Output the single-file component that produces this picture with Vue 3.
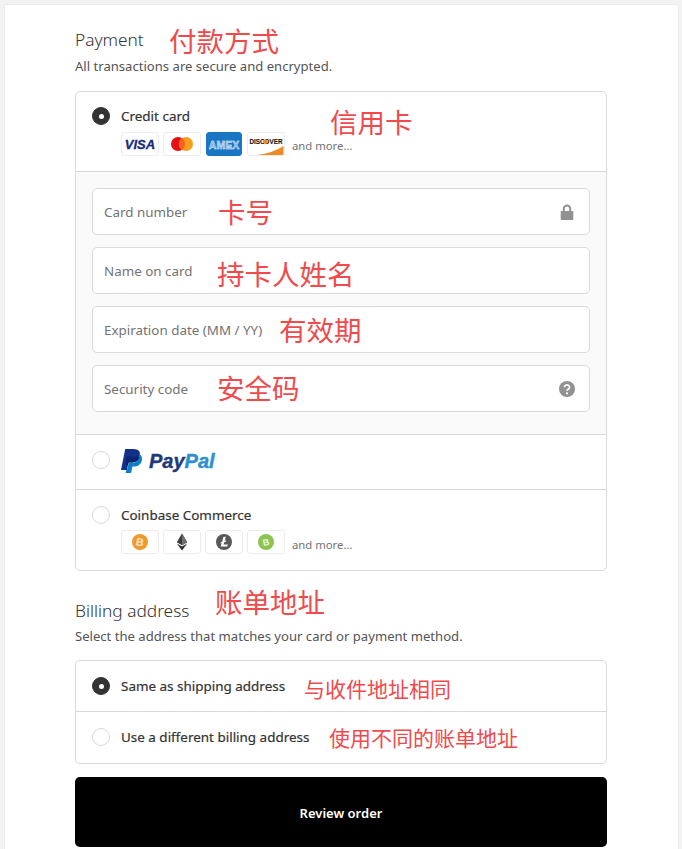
<template>
  <div class="page">
    <main class="panel">
      <section class="section">
        <h2 class="section__title">Payment</h2>
        <p class="section__sub">All transactions are secure and encrypted.</p>

        <div class="box">
          <div class="option option--tall">
            <span class="radio radio--on"></span>
            <div class="option__body">
              <div class="option__label">Credit card</div>
              <div class="badges">
                <span class="badge">
                  <svg viewBox="0 0 38 24" width="38" height="24">
                    <text x="19" y="17" text-anchor="middle" class="logo-visa">VISA</text>
                  </svg>
                </span>
                <span class="badge">
                  <svg viewBox="0 0 38 24" width="38" height="24">
                    <circle cx="15" cy="12" r="7" fill="#e3101a" />
                    <circle cx="23" cy="12" r="7" fill="#f99e1c" />
                    <path d="M19 6.200a7 7 0 0 1 0 11.600a7 7 0 0 1 0-11.600z" fill="#f0641e" />
                  </svg>
                </span>
                <span class="badge badge--amex">
                  <svg viewBox="0 0 36 24" width="36" height="24">
                    <text x="18" y="16.500" text-anchor="middle" class="logo-amex">AMEX</text>
                  </svg>
                </span>
                <span class="badge">
                  <svg viewBox="0 0 38 24" width="38" height="24">
                    <path d="M10 23 Q26 21 36.500 14 V23z" fill="#ee8a24" />
                    <text x="19" y="12" text-anchor="middle" class="logo-discover">DISCOVER</text>
                    <circle cx="18.500" cy="9.800" r="2.400" fill="#f08a1d" />
                  </svg>
                </span>
                <span class="more">and more...</span>
              </div>
            </div>
          </div>

          <div class="fields">
            <div v-for="field in fields" :key="field.label" class="field">
              <span class="field__label">{{ field.label }}</span>
              <svg v-if="field.icon === 'lock'" class="field__icon" viewBox="0 0 16 16" width="16" height="16">
                <path d="M2.500 7h1.300V4.700a4.200 4.200 0 0 1 8.400 0V7h1.300a.8.800 0 0 1 .8.800v7.400a.8.800 0 0 1-.8.800H2.500a.8.800 0 0 1-.8-.8V7.800a.8.800 0 0 1 .8-.8zM5.800 4.700V7h4.400V4.700a2.200 2.200 0 0 0-4.400 0z" fill="#919191" fill-rule="evenodd" />
              </svg>
              <svg v-if="field.icon === 'help'" class="field__icon" viewBox="0 0 16 16" width="16" height="16">
                <circle cx="8" cy="8" r="8" fill="#919191" />
                <path d="M5.400 6.200a2.600 2.300 0 1 1 3.900 2c-.8.500-1.300.8-1.300 1.500" fill="none" stroke="#fff" stroke-width="1.700" />
                <circle cx="8" cy="12.300" r="1.100" fill="#fff" />
              </svg>
            </div>
          </div>

          <div class="option option--paypal">
            <span class="radio"></span>
            <div class="paypal">
              <svg viewBox="0 0 21 24" width="21" height="24">
                <path d="M4.200 0H12.500C17.500 0 19.600 2.800 18.800 6.500C17.800 11.500 14.500 13.500 10 13.500H7.500L6 21H0z" fill="#12318a" />
                <path d="M18.900 5.500C20.800 6.700 21.400 8.800 20.800 11.400C19.800 15.500 16.900 17.500 13 17.500H11.400L10.100 24H4.600L5.400 20.800H6.100L7.700 14H10.200C14.700 14 17.900 11.800 18.900 5.500z" fill="#0c7fc7" />
                <path d="M5.600 7.500H14C15.500 7.500 17.200 7.800 18.600 8.200C17.400 11.900 14.400 13.500 10 13.500H7.500L7 16H4.500z" fill="#0a2470" />
              </svg>
              <span class="paypal__word"><span class="paypal__pay">Pay</span><span class="paypal__pal">Pal</span></span>
            </div>
          </div>

          <div class="option option--tall option--coin option--last">
            <span class="radio"></span>
            <div class="option__body">
              <div class="option__label">Coinbase Commerce</div>
              <div class="badges">
                <span class="badge">
                  <svg viewBox="0 0 38 24" width="38" height="24">
                    <circle cx="19" cy="12" r="8" fill="#f09a2e" />
                    <text x="19" y="16" text-anchor="middle" class="logo-coin" transform="rotate(12 19 12)">B</text>
                  </svg>
                </span>
                <span class="badge">
                  <svg viewBox="0 0 38 24" width="38" height="24">
                    <path d="M19 3.500L13.800 12.300L19 15.300L24.200 12.300z" fill="#3c3c3d" />
                    <path d="M19 3.500V15.300L24.200 12.300z" fill="#6f6f70" />
                    <path d="M13.800 13.500L19 20.500L24.200 13.500L19 16.600z" fill="#2a2a2b" />
                  </svg>
                </span>
                <span class="badge">
                  <svg viewBox="0 0 38 24" width="38" height="24">
                    <circle cx="19" cy="12" r="8" fill="#58595b" />
                    <path d="M18.500 6.800h2.300l-1 4l1.500-.5l-.4 1.400l-1.600.6l-.7 2.300h4.200l-.5 1.800h-6.600l1-3.400l-1.300.5l.4-1.300l1.300-.5z" fill="#fff" />
                  </svg>
                </span>
                <span class="badge">
                  <svg viewBox="0 0 38 24" width="38" height="24">
                    <circle cx="19" cy="12" r="8" fill="#8dc351" />
                    <text x="19" y="15.500" text-anchor="middle" class="logo-coin logo-coin--small" transform="rotate(-12 19 12)">B</text>
                  </svg>
                </span>
                <span class="more">and more...</span>
              </div>
            </div>
          </div>
        </div>
      </section>

      <section class="section section--billing">
        <h2 class="section__title">Billing address</h2>
        <p class="section__sub">Select the address that matches your card or payment method.</p>

        <div class="box">
          <div class="option option--short">
            <span class="radio radio--on"></span>
            <div class="option__label">Same as shipping address</div>
          </div>
          <div class="option option--short option--last">
            <span class="radio"></span>
            <div class="option__label">Use a different billing address</div>
          </div>
        </div>
      </section>

      <button type="button" class="review">Review order</button>

      <span
        v-for="note in notes"
        :key="note.text"
        class="note"
        :style="{ left: note.x + 'px', top: note.y + 'px', fontSize: note.size + 'px' }"
      >{{ note.text }}</span>
    </main>
  </div>
</template>

<script setup>
const fields = [
  { label: 'Card number', icon: 'lock' },
  { label: 'Name on card' },
  { label: 'Expiration date (MM / YY)' },
  { label: 'Security code', icon: 'help' },
];

// red annotations pasted over the screenshot
const notes = [
  { text: '付款方式', x: 164, y: 23, size: 27.5 },
  { text: '信用卡', x: 325, y: 104, size: 27.5 },
  { text: '卡号', x: 213, y: 194, size: 27.5 },
  { text: '持卡人姓名', x: 212, y: 256, size: 27.5 },
  { text: '有效期', x: 274, y: 312, size: 27.5 },
  { text: '安全码', x: 212, y: 370, size: 27.5 },
  { text: '账单地址', x: 210, y: 584, size: 27.5 },
  { text: '与收件地址相同', x: 299, y: 675, size: 21 },
  { text: '使用不同的账单地址', x: 324, y: 724, size: 21 },
];
</script>

<style>
html,
body {
  margin: 0;
  height: 849px;
  overflow: hidden;
  background: #f3f3f3;
}
</style>

<style scoped>
.page {
  padding: 5px 4px 0 5px;
  font-family: "Noto Sans", "Open Sans", sans-serif;
  color: #333;
}

.panel {
  position: relative;
  background: #fff;
  height: 844px;
  padding: 0 71px 0 70px;
  box-shadow: 0 0 0 1px #ebebeb;
}

.section {
  padding-top: 24px;
}

.section--billing {
  padding-top: 29px;
}

.section__title {
  margin: 0;
  font-size: 17.300px;
  line-height: 22px;
  font-weight: 300;
}

.section__sub {
  margin: 6px 0 0;
  font-size: 13.100px;
  line-height: 18px;
  color: #545454;
}

.section--billing .section__sub {
  margin-top: 5px;
}

.box {
  margin-top: 16px;
  border: 1px solid #d9d9d9;
  border-radius: 5px;
}

.section--billing .box {
  margin-top: 15px;
}

.option {
  display: flex;
  align-items: flex-start;
  gap: 11px;
  padding: 16px 16px 0;
  border-bottom: 1px solid #d9d9d9;
  box-sizing: border-box;
}

.option--tall {
  height: 80px;
  padding-top: 15px;
}

.option--paypal {
  height: 55px;
  padding-top: 16px;
}

.option--coin {
  padding-top: 16px;
}

.option--coin .badges {
  margin-top: 5px;
}

.option--coin .more {
  margin-top: 5px;
}

.option--short {
  height: 51px;
  padding-top: 16px;
}

.option--short .option__label {
  margin-top: -1px;
}

.option--last {
  border-bottom: 0;
}

.option__body {
  margin-top: -1px;
}

.option__label {
  font-size: 13.450px;
  line-height: 20px;
  font-weight: 400;
  color: #333;
  -webkit-text-stroke: 0.2px #333;
}

.radio {
  flex: none;
  position: relative;
  width: 18px;
  height: 18px;
  border: 1px solid #d9d9d9;
  border-radius: 50%;
  box-sizing: border-box;
  background: #fff;
}

.radio--on {
  background: #333;
  border-color: #333;
}

.radio--on::after {
  content: "";
  position: absolute;
  left: 5.500px;
  top: 5.500px;
  width: 5px;
  height: 5px;
  border-radius: 50%;
  background: #fff;
}

.badges {
  display: flex;
  align-items: center;
  gap: 4px;
  margin-top: 6px;
}

.badge {
  display: flex;
  justify-content: center;
  width: 38px;
  height: 24px;
  border: 1px solid #ececec;
  border-radius: 3px;
  box-sizing: border-box;
  overflow: hidden;
  background: #fff;
}

.badge svg {
  flex: none;
  margin-top: -1px;
}

.badge--amex {
  width: 36px;
  margin: 0 1px;
  background: #1976c5;
  border-color: #1976c5;
}

.logo-visa {
  font: italic 700 13px "Liberation Sans", sans-serif;
  fill: #1a2a78;
  stroke: #1a2a78;
  stroke-width: 0.300px;
}

.logo-amex {
  font: 700 10.500px "Liberation Sans", sans-serif;
  fill: #6aa9e0;
  stroke: #fff;
  stroke-width: 0.400px;
}

.logo-discover {
  font: 700 6.300px "Liberation Sans", sans-serif;
  fill: #111;
  stroke: #111;
  stroke-width: 0.100px;
}

.logo-coin {
  font: 700 11px "Liberation Sans", sans-serif;
  fill: #fbe4c4;
}

.logo-coin--small {
  font-size: 9px;
  fill: #eef8e2;
}

.more {
  margin: 3px 0 0 3px;
  font-size: 11.300px;
  color: #737373;
}

.fields {
  display: flex;
  flex-direction: column;
  gap: 12px;
  padding: 16px 16px 22px;
  background: #fafafa;
  border-bottom: 1px solid #d9d9d9;
}

.field {
  display: flex;
  align-items: center;
  justify-content: space-between;
  height: 47px;
  padding: 0 14px 0 11px;
  border: 1px solid #d9d9d9;
  border-radius: 5px;
  box-sizing: border-box;
  background: #fff;
}

.field__label {
  font-size: 13.400px;
  color: #737373;
}

.paypal {
  display: flex;
  align-items: center;
  gap: 7px;
  margin-top: -2px;
}

.paypal__word {
  font: italic 700 20px "Liberation Sans", sans-serif;
  -webkit-text-stroke: 0.4px currentColor;
}

.paypal__pay {
  color: #1f3a7a;
}

.paypal__pal {
  color: #2b8fd0;
}

.review {
  display: block;
  width: 100%;
  height: 70px;
  margin-top: 13px;
  padding: 2px 0 0;
  border: 0;
  border-radius: 5px;
  background: #000;
  color: #fff;
  font-family: inherit;
  font-size: 13px;
  font-weight: 600;
}

.note {
  position: absolute;
  margin-top: -5px;
  line-height: 1.3;
  white-space: nowrap;
  font-family: "Noto Sans CJK SC", sans-serif;
  font-weight: 400;
  color: #f04a4c;
}
</style>
